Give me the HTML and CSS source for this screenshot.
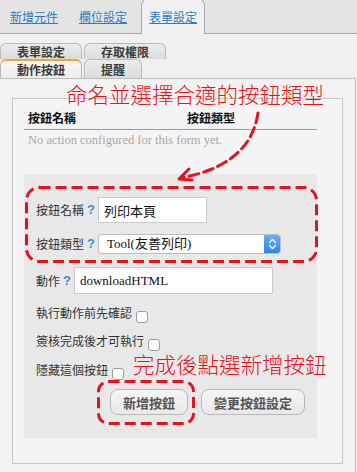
FILE: index.html
```html
<!DOCTYPE html>
<html lang="zh-Hant">
<head>
<meta charset="utf-8">
<title>動作按鈕</title>
<link rel="stylesheet" href="styles.css">
</head>
<body>
<div class="page">
  <div class="topbar">
    <a class="toplink" href="#">新增元件</a>
    <a class="toplink second" href="#">欄位設定</a>
    <div class="toptab"><a class="toplink" href="#">表單設定</a></div>
  </div>

  <div class="subtabs">
    <div class="tabrow row1">
      <div class="tab">表單設定</div>
      <div class="tab">存取權限</div>
    </div>
    <div class="tabrow row2">
      <div class="tab active">動作按鈕</div>
      <div class="tab">提醒</div>
    </div>
  </div>

  <div class="content">
    <div class="panel">
      <div class="thead"><span class="c1">按鈕名稱</span><span class="c2">按鈕類型</span></div>
      <div class="empty">No action configured for this form yet.</div>

      <div class="form">
        <div class="frow r-name">
          <span class="lbl">按鈕名稱</span><span class="help">?</span>
          <input class="field f-name" type="text" value="列印本頁">
        </div>
        <div class="frow r-type">
          <span class="lbl">按鈕類型</span><span class="help">?</span>
          <div class="select">
            <span class="sel-text">Tool(友善列印)</span>
            <span class="sel-arrows">
              <svg width="17" height="20" viewBox="0 0 17 20"><polyline points="5.5,8.5 8.5,5.5 11.5,8.5" fill="none" stroke="#fff" stroke-width="1.4" stroke-linecap="round" stroke-linejoin="round"/><polyline points="5.5,11.5 8.5,14.5 11.5,11.5" fill="none" stroke="#fff" stroke-width="1.4" stroke-linecap="round" stroke-linejoin="round"/></svg>
            </span>
          </div>
        </div>
        <div class="frow r-act">
          <span class="lbl">動作</span><span class="help">?</span>
          <input class="field f-act" type="text" value="downloadHTML">
        </div>
        <div class="frow r-chk first">
          <span class="lbl">執行動作前先確認</span><input class="chk" type="checkbox">
        </div>
        <div class="frow r-chk">
          <span class="lbl">簽核完成後才可執行</span><input class="chk" type="checkbox">
        </div>
        <div class="frow r-chk last">
          <span class="lbl">隱藏這個按鈕</span><input class="chk" type="checkbox">
        </div>
        <div class="frow r-btns">
          <button class="btn" type="button">新增按鈕</button>
          <button class="btn" type="button">變更按鈕設定</button>
        </div>
      </div>
    </div>
  </div>

  <svg class="annot" width="357" height="472" viewBox="0 0 357 472">
    <rect x="26.5" y="187.5" width="290" height="74" rx="13" ry="13" fill="none" stroke="#e3141c" stroke-width="3" stroke-dasharray="11 5"/>
    <rect x="98.5" y="381.5" width="95" height="42" rx="10" ry="10" fill="none" stroke="#e3141c" stroke-width="3" stroke-dasharray="11 5"/>
    <path d="M258,113 C254,140 238,158 212,169 C200,174 190,176 181,178" fill="none" stroke="#e3141c" stroke-width="3" stroke-dasharray="10 5" stroke-linecap="round"/>
    <path d="M189,169 L179,179 L192,180" fill="none" stroke="#e3141c" stroke-width="3" stroke-linecap="round" stroke-linejoin="round"/>
  </svg>
  <div class="note n1">命名並選擇合適的按鈕類型</div>
  <div class="note n2">完成後點選新增按鈕</div>
</div>
</body>
</html>
```

FILE: styles.css
```css
* { box-sizing: border-box; }

html, body {
  margin: 0;
  padding: 0;
  background: #f0f0f0;
}

body {
  font-family: "Noto Sans CJK TC", "Noto Sans", sans-serif;
  color: #333;
}

.page {
  position: relative;
  width: 357px;
  height: 472px;
  overflow: hidden;
}

/* top bar */
.topbar {
  display: flex;
  align-items: flex-start;
  height: 34px;
  padding-left: 10px;
  background: #e4e4e4;
  border-bottom: 1px solid #a9a9a9;
}

.toplink {
  display: block;
  margin-top: 10px;
  font-size: 12px;
  line-height: 13px;
  color: #2a7cc3;
  text-decoration: underline;
  margin-right: 21px;
  white-space: nowrap;
}

.toplink.second { margin-right: 14px; }

.toptab {
  width: 64px;
  height: 37px;
  margin-top: -3px;
  padding: 12px 0 0 7px;
  background: #f0f0f0;
  border: 1px solid #a9a9a9;
  border-bottom: none;
  border-radius: 9px 9px 0 0;
}

.toptab .toplink {
  margin: 0;
}

/* sub tabs */
.subtabs {
  margin-top: 9px;
}

.tabrow {
  display: flex;
  gap: 2px;
}

.tab {
  padding: 0 16px;
  font-size: 12px;
  font-weight: 700;
  color: #3a3a3a;
  border: 1px solid #b9b9b9;
  border-bottom: none;
  border-radius: 6px 6px 0 0;
  background: linear-gradient(#ececec, #dcdcdc);
  white-space: nowrap;
}

.row1 .tab {
  height: 16px;
  line-height: 14px;
  padding-top: 1px;
}

.row2 .tab {
  height: 19px;
  line-height: 17px;
  padding-top: 1px;
}

.row2 .tab.active {
  background: linear-gradient(#f8f8f8, #ececec);
  border-top: 2px solid #f0a43a;
  padding-top: 0;
}

/* content */
.content {
  width: 357px;
  margin-left: -1px;
  height: 420px;
  padding: 19px 12px 0 12px;
  background: #f2f2f2;
  border: 1px solid #bdbdbd;
}

.panel {
  padding: 0 25px 25px 11px;
  background: #f4f4f4;
  border: 1px solid #c6c6c6;
}

.thead {
  display: flex;
  padding-top: 9px;
  padding-bottom: 1px;
  line-height: 20px;
  font-size: 12px;
  font-weight: 700;
  color: #111;
  border-bottom: 1px solid #9a9a9a;
}

.thead .c1 { width: 159px; padding-left: 4px; }
.thead .c2 { padding-left: 4px; }

.empty {
  padding-left: 4px;
  line-height: 20px;
  font-family: "Liberation Serif", serif;
  font-size: 12.5px;
  color: #a8a8a8;
  white-space: nowrap;
}

.form {
  width: 293px;
  margin-top: 24px;
  padding: 23px 12px 23px 12px;
  background: #e8e8e8;
}

.frow {
  display: flex;
  align-items: center;
}

.lbl {
  font-size: 12px;
  line-height: 16px;
  color: #333;
  white-space: nowrap;
}

.help {
  margin: 0 3px 0 3px;
  font-family: "Liberation Sans", sans-serif;
  font-size: 13px;
  font-weight: 700;
  color: #3a8fd5;
  line-height: 16px;
}

.field {
  flex-shrink: 0;
  margin: 0;
  padding: 0 5px;
  background: #fff;
  border: 1px solid #cbcbcb;
  border-radius: 0;
  outline: none;
  color: #111;
  font-size: 13px;
}

.r-name { height: 26px; }
.f-name {
  width: 109px;
  height: 26px;
  font-family: "Noto Sans CJK TC", sans-serif;
}

.r-type { height: 20px; margin-top: 11px; }
.select {
  flex-shrink: 0;
  display: flex;
  align-items: center;
  width: 183px;
  height: 20px;
  background: #fff;
  border: 1px solid #bcbcbc;
  border-radius: 4px;
  overflow: hidden;
}

.sel-text {
  flex: 1;
  padding-left: 8px;
  font-family: "Liberation Serif", "Noto Sans CJK TC", serif;
  font-size: 13px;
  line-height: 18px;
  color: #111;
  white-space: nowrap;
}

.sel-arrows {
  display: block;
  width: 17px;
  height: 20px;
  margin: -1px -1px -1px 0;
  background: linear-gradient(#6cb1f7, #2f7fe6);
  border-radius: 0 4px 4px 0;
}

.sel-arrows svg { display: block; }

.r-act { height: 27px; margin-top: 13px; }
.f-act {
  width: 199px;
  height: 27px;
  font-family: "Liberation Serif", serif;
}

.r-chk { height: 20px; margin-top: 8px; }
.r-chk.first { margin-top: 9px; }
.r-chk.last { margin-top: 9px; }

.chk {
  flex-shrink: 0;
  appearance: none;
  -webkit-appearance: none;
  width: 12px;
  height: 12px;
  margin: 7px 0 0 4px;
  background: #fff;
  border: 1px solid #9c9c9c;
  border-radius: 3px;
}

.r-btns {
  height: 26px;
  margin-top: 9px;
  padding-left: 74px;
  gap: 13px;
}

.btn {
  flex-shrink: 0;
  height: 26px;
  margin: 0;
  padding: 0 12px;
  font-family: "Noto Sans CJK TC", sans-serif;
  font-size: 13px;
  font-weight: 700;
  color: #555;
  white-space: nowrap;
  background: linear-gradient(#f5f5f5, #e9e9e9);
  border: 1px solid #b8b8b8;
  border-radius: 8px;
}

/* annotations */
.annot {
  position: absolute;
  left: 0;
  top: 0;
  pointer-events: none;
}

.note {
  position: absolute;
  font-family: "Noto Sans CJK TC", sans-serif;
  font-weight: 300;
  font-size: 21.5px;
  line-height: 26px;
  color: #e3141c;
  white-space: nowrap;
}

.n1 { left: 66px; top: 81px; }
.n2 { left: 133px; top: 351px; }
```
